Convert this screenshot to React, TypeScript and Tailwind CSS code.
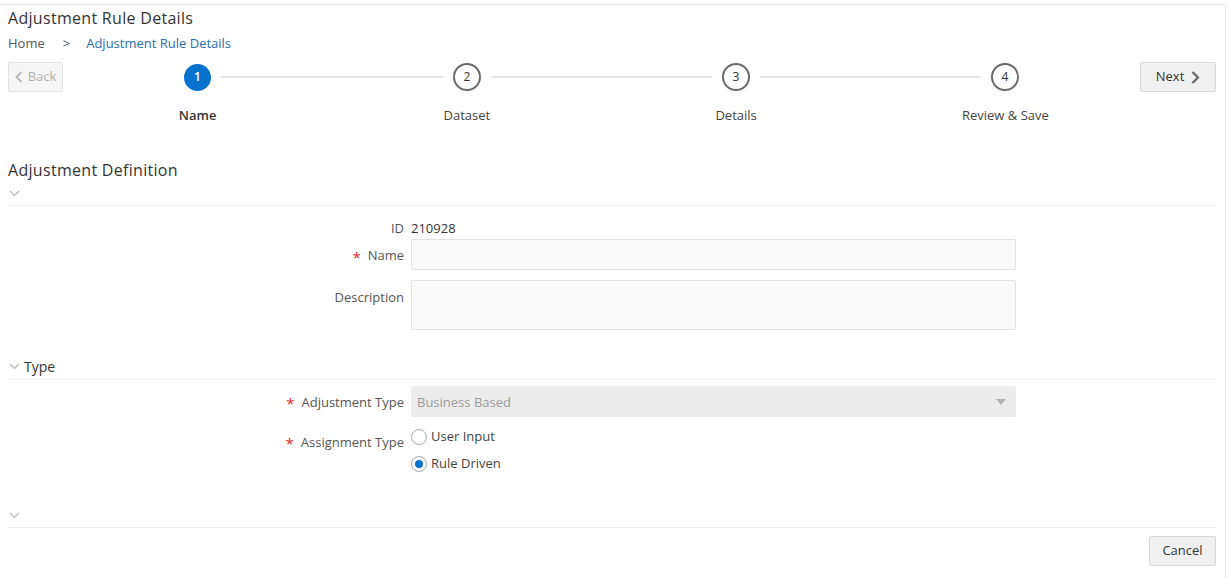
const steps = ["Name", "Dataset", "Details", "Review & Save"];

const Chevron = ({ className = "" }: { className?: string }) => (
  <svg width="11" height="7" viewBox="0 0 11 7" className={className}>
    <path d="M1 1 L5.5 5.5 L10 1" fill="none" stroke="#b8b8b8" strokeWidth="1.2" />
  </svg>
);

const Req = () => <span className="text-[#e0242b] mr-[7px] text-[15px] leading-none relative top-[1px]">*</span>;

const Step = ({ n, active }: { n: number; active: boolean }) =>
  active ? (
    <div className="w-[27px] h-[27px] rounded-full bg-[#0572ce] text-white flex items-center justify-center text-[12px] font-semibold shrink-0">
      {n}
    </div>
  ) : (
    <div className="w-[28px] h-[28px] rounded-full border-2 border-[#6b6b6b] bg-white text-[#333] flex items-center justify-center text-[12px] shrink-0">
      {n}
    </div>
  );

export default function App() {
  return (
    <div className="w-[1229px] h-[578px] bg-white overflow-hidden pt-[4px]" style={{ fontFamily: '"Open Sans", "Noto Sans", sans-serif' }}>
      <div className="w-[1226px] h-[574px] border-t border-r border-[#e6e6e6] pl-[8px] pr-[9px] text-[#333]">
        {/* header */}
        <div className="pt-[3px] text-[16px] leading-[20px] tracking-[0.3px] text-[#333]">Adjustment Rule Details</div>
        <div className="mt-[5px] flex items-center text-[13px] leading-[20px]">
          <span className="text-[#555]">Home</span>
          <span className="text-[#555] ml-[18px] mr-[16px]">&gt;</span>
          <span className="text-[#2a6db0]">Adjustment Rule Details</span>
        </div>

        {/* train */}
        <div className="mt-[9px] flex items-start">
          <button className="w-[55px] h-[30px] shrink-0 flex items-center justify-center gap-[5px] bg-[#f6f6f6] border border-[#e3e3e3] rounded-[2px] text-[13px] text-[#b0b0b0]">
            <svg width="8" height="12" viewBox="0 0 8 12"><path d="M6.5 1 L1.5 6 L6.5 11" fill="none" stroke="#b8b8b8" strokeWidth="2" /></svg>
            Back
          </button>
          <div className="flex-1">
            <div className="h-[30px] flex items-center px-[121px]">
              {steps.map((s, i) => (
                <div key={s} className={i < steps.length - 1 ? "flex items-center flex-1" : "flex items-center"}>
                  <Step n={i + 1} active={i === 0} />
                  {i < steps.length - 1 && <div className="flex-1 h-[2px] bg-[#e4e4e4] mx-[10px]" />}
                </div>
              ))}
            </div>
            <div className="grid grid-cols-4 mt-[14px] text-[13px] leading-[18px] text-center">
              {steps.map((s, i) => (
                <div key={s} className={i === 0 ? "font-semibold text-[#333]" : "text-[#444]"}>{s}</div>
              ))}
            </div>
          </div>
          <button className="w-[76px] h-[30px] shrink-0 flex items-center justify-center gap-[7px] bg-[#f0f0f0] border border-[#d9d9d9] rounded-[2px] text-[13px] text-[#333]">
            Next
            <svg width="9" height="13" viewBox="0 0 9 13"><path d="M1.5 1 L7 6.5 L1.5 12" fill="none" stroke="#666" strokeWidth="2.2" /></svg>
          </button>
        </div>

        {/* Adjustment Definition */}
        <div className="mt-[35px] text-[16px] leading-[22px] tracking-[0.3px]">Adjustment Definition</div>
        <div className="h-[14px] flex items-center pl-[1px] mt-[5px]"><Chevron /></div>
        <div className="h-px bg-[#eeeeee] mt-[5px]" />

        <div className="mt-[14px] text-[13px]">
          <div className="flex items-center h-[18px]">
            <div className="w-[396px] text-right text-[#555]">ID</div>
            <div className="ml-[7px] text-[#333]">210928</div>
          </div>
          <div className="flex items-center mt-[1px]">
            <div className="w-[396px] text-right text-[#555] flex justify-end items-center pt-[3px]"><Req />Name</div>
            <div className="ml-[7px] w-[605px] h-[31px] bg-[#fafafa] border border-[#e2e2e2] rounded-[2px]" />
          </div>
          <div className="flex items-start mt-[10px]">
            <div className="w-[396px] text-right text-[#555] pt-[8px]">Description</div>
            <div className="ml-[7px] w-[605px] h-[50px] bg-[#fafafa] border border-[#e2e2e2] rounded-[2px]" />
          </div>
        </div>

        {/* Type */}
        <div className="mt-[26px] flex items-center h-[20px] gap-[4px] pl-[1px]">
          <Chevron />
          <span className="text-[14px] text-[#333]">Type</span>
        </div>
        <div className="h-px bg-[#eeeeee] mt-[3px]" />

        <div className="mt-[6px] text-[13px]">
          <div className="flex items-center">
            <div className="w-[396px] text-right text-[#555] flex justify-end items-center pt-[2px]"><Req />Adjustment Type</div>
            <div className="ml-[7px] w-[605px] h-[31px] bg-[#ececec] rounded-[2px] flex items-center justify-between pl-[6px] pr-[10px] text-[#9a9a9a]">
              <span className="pt-[2px]">Business Based</span>
              <svg width="10" height="6" viewBox="0 0 10 6"><path d="M0 0 H10 L5 6 Z" fill="#b3b3b3" /></svg>
            </div>
          </div>
          <div className="flex items-start mt-[10px]">
            <div className="w-[396px] text-right text-[#555] flex justify-end items-center pt-[6px]"><Req />Assignment Type</div>
            <div className="ml-[7px] flex flex-col gap-[9px] pt-[1px]">
              <div className="flex items-center gap-[4px] h-[18px]">
                <span className="w-[16px] h-[16px] rounded-full border border-[#aaa] bg-white" />
                <span className="text-[#444]">User Input</span>
              </div>
              <div className="flex items-center gap-[4px] h-[18px]">
                <span className="w-[16px] h-[16px] rounded-full border border-[#aaa] bg-white flex items-center justify-center">
                  <span className="w-[8px] h-[8px] rounded-full bg-[#0572ce]" />
                </span>
                <span className="text-[#444]">Rule Driven</span>
              </div>
            </div>
          </div>
        </div>

        <div className="mt-[37px] h-[10px] flex items-center pl-[1px]"><Chevron /></div>
        <div className="h-px bg-[#eeeeee] mt-[7px]" />

        <div className="mt-[8px] flex justify-end">
          <button className="w-[67px] h-[30px] bg-[#f0f0f0] border border-[#d9d9d9] rounded-[2px] text-[13px] text-[#333]">Cancel</button>
        </div>
      </div>
    </div>
  );
}
